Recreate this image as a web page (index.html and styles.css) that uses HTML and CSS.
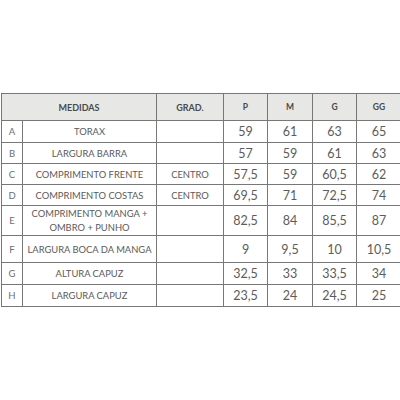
FILE: index.html
```html
<!DOCTYPE html>
<html>
<head>
<meta charset="utf-8">
<link rel="stylesheet" href="styles.css">
</head>
<body>
<div class="wrap">
<table class="sizes">
  <colgroup>
    <col class="c-letter"><col class="c-name"><col class="c-grad">
    <col class="c-num"><col class="c-num2"><col class="c-num"><col class="c-num2">
  </colgroup>
  <thead>
    <tr class="r-head">
      <th colspan="2" class="h-big">MEDIDAS</th>
      <th class="h-big">GRAD.</th>
      <th>P</th><th>M</th><th>G</th><th>GG</th>
    </tr>
  </thead>
  <tbody>
    <tr class="r22"><td class="let">A</td><td class="name">TORAX</td><td class="name"></td><td class="num">59</td><td class="num">61</td><td class="num">63</td><td class="num">65</td></tr>
    <tr class="r21"><td class="let">B</td><td class="name">LARGURA BARRA</td><td class="name"></td><td class="num">57</td><td class="num">59</td><td class="num">61</td><td class="num">63</td></tr>
    <tr class="r21"><td class="let">C</td><td class="name">COMPRIMENTO FRENTE</td><td class="name">CENTRO</td><td class="num">57,5</td><td class="num">59</td><td class="num">60,5</td><td class="num">62</td></tr>
    <tr class="r21"><td class="let">D</td><td class="name">COMPRIMENTO COSTAS</td><td class="name">CENTRO</td><td class="num">69,5</td><td class="num">71</td><td class="num">72,5</td><td class="num">74</td></tr>
    <tr class="r30"><td class="let">E</td><td class="name two">COMPRIMENTO MANGA +<br>OMBRO + PUNHO</td><td class="name"></td><td class="num">82,5</td><td class="num">84</td><td class="num">85,5</td><td class="num">87</td></tr>
    <tr class="r27"><td class="let">F</td><td class="name">LARGURA BOCA DA MANGA</td><td class="name"></td><td class="num">9</td><td class="num">9,5</td><td class="num">10</td><td class="num">10,5</td></tr>
    <tr class="r22"><td class="let">G</td><td class="name">ALTURA CAPUZ</td><td class="name"></td><td class="num">32,5</td><td class="num">33</td><td class="num">33,5</td><td class="num">34</td></tr>
    <tr class="r22"><td class="let">H</td><td class="name">LARGURA CAPUZ</td><td class="name"></td><td class="num">23,5</td><td class="num">24</td><td class="num">24,5</td><td class="num">25</td></tr>
  </tbody>
</table>
</div>
</body>
</html>
```

FILE: styles.css
```css
html, body {
  margin: 0;
  padding: 0;
  background: #ffffff;
  overflow: hidden;
}
.wrap {
  width: 400px;
  height: 400px;
  overflow: hidden;
  padding-top: 93px;
  padding-left: 1px;
  box-sizing: border-box;
}
.sizes {
  border-collapse: collapse;
  table-layout: fixed;
  width: 401px;
  font-family: Lato, "Open Sans", sans-serif;
  color: #5a5a5a;
}
.c-letter { width: 21px; }
.c-name { width: 134px; }
.c-grad { width: 67px; }
.c-num { width: 44px; }
.c-num2 { width: 45px; }
.sizes th, .sizes td {
  border: 1px solid #777777;
  padding: 0;
  text-align: center;
  vertical-align: middle;
  overflow: hidden;
  white-space: nowrap;
}
.r-head { height: 27px; }
.r-head th {
  background: #e7e8e6;
  font-weight: 700;
  font-size: 8.5px;
  color: #4a4a4a;
}
.r-head th.h-big { font-size: 9px; }
.r22 { height: 22px; }
.r21 { height: 21px; }
.r27 { height: 27px; }
.r30 { height: 30px; }
.let {
  font-size: 9.5px;
  color: #6e6e6e;
}
.name {
  font-size: 9.4px;
  color: #5a5a5a;
}
.name.two { line-height: 14px; }
.num {
  font-size: 12.5px;
  color: #5c5c5c;
}
```
